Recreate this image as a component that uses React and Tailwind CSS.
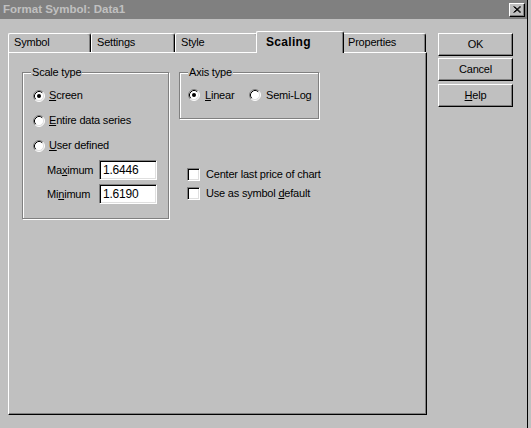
import React from 'react'

/* Win95-style "Format Symbol" dialog, Scaling tab */

const raised = 'border-t border-l border-t-white border-l-white border-r border-b border-r-black border-b-black shadow-[inset_-1px_-1px_0_#808080]'
const sunken = 'border-t border-l border-t-[#808080] border-l-[#808080] border-r border-b border-r-white border-b-white shadow-[inset_1px_1px_0_#000,inset_-1px_-1px_0_#dfdfdf] bg-white'

function Radio({ checked }) {
  return (
    <svg width="12" height="12" viewBox="0 0 12 12" className="shrink-0">
      <circle cx="6" cy="6" r="5" fill="#fff" />
      <path d="M2.11 9.89 A5.5 5.5 0 0 1 9.89 2.11" stroke="#808080" fill="none" />
      <path d="M9.89 2.11 A5.5 5.5 0 0 1 2.11 9.89" stroke="#fff" fill="none" />
      <path d="M2.82 9.18 A4.5 4.5 0 0 1 9.18 2.82" stroke="#000" fill="none" />
      <path d="M9.18 2.82 A4.5 4.5 0 0 1 2.82 9.18" stroke="#dfdfdf" fill="none" />
      {checked && <circle cx="6" cy="6" r="2" fill="#000" />}
    </svg>
  )
}

function Check() {
  return <div className={`w-[13px] h-[13px] shrink-0 ${sunken}`} />
}

function Group({ label, className, children }) {
  return (
    <div className={`relative border border-[#808080] shadow-[1px_1px_0_#fff,inset_1px_1px_0_#fff] ${className}`}>
      <span className="absolute left-[8px] top-[-8px] bg-[#c0c0c0] px-[1px] leading-[14px]">{label}</span>
      {children}
    </div>
  )
}

function Tab({ label, w, active }) {
  if (active) {
    return (
      <div className={`${w} relative z-10 -mx-[2px] mb-[-1px] h-[22px] bg-[#c0c0c0] border-t border-l border-t-white border-l-white border-r border-r-black shadow-[inset_-1px_0_0_#808080] rounded-tl-[2px] rounded-tr-[3px] pl-[9px] pt-[2px] leading-[16px] font-bold text-[12px] tracking-[0.3px]`}>
        {label}
      </div>
    )
  }
  return (
    <div className={`${w} h-[19px] border-t border-l border-t-white border-l-white border-r border-r-black shadow-[inset_-1px_0_0_#808080] rounded-tl-[2px] rounded-tr-[3px] pl-[5px] pt-[1px] leading-[14px]`}>
      {label}
    </div>
  )
}

function Button({ children }) {
  return (
    <div className={`w-[75px] h-[23px] flex items-center justify-center ${raised}`}>{children}</div>
  )
}

export default function App() {
  return (
    <div className="w-[531px] h-[428px] bg-[#c0c0c0] overflow-hidden font-['Liberation_Sans',Arial,sans-serif] text-[11px] tracking-[-0.2px] text-black">
      <div className="w-[528px] h-[428px] flex flex-col border-r border-r-black">
        {/* title bar */}
        <div className="h-[19px] bg-[#808080] flex items-center justify-between pl-[3px] pr-[2px] shrink-0">
          <span className="font-bold text-[11.5px] tracking-[0px] text-[#c0c0c0] pt-[1px]">Format Symbol: Data1</span>
          <div className={`w-[16px] h-[14px] flex items-center justify-center bg-[#c0c0c0] ${raised}`}>
            <svg width="8" height="7" viewBox="0 0 8 7">
              <path d="M0.5 0.5 L7 6.5 M1.5 0.5 L8 6.5 M7 0.5 L0.5 6.5 M8 0.5 L1.5 6.5" stroke="#000" strokeWidth="1" />
            </svg>
          </div>
        </div>

        <div className="flex pl-[8px] pt-[12px]">
          {/* tabs + panel */}
          <div className="w-[419px] flex flex-col">
            <div className="h-[21px] flex items-end">
              <Tab label="Symbol" w="w-[83px]" />
              <Tab label="Settings" w="w-[84px]" />
              <Tab label="Style" w="w-[83px]" />
              <Tab label="Scaling" w="w-[88px]" active />
              <Tab label="Properties" w="w-[84px]" />
            </div>
            <div className={`h-[363px] flex items-start pl-[13px] pt-[19px] ${raised}`}>
              <Group label="Scale type" className="w-[147px] h-[147px] pt-[10px] pl-[10px]">
                <div className="h-[25px] flex items-center gap-[4px]">
                  <Radio checked />
                  <span><span className="underline">S</span>creen</span>
                </div>
                <div className="h-[25px] flex items-center gap-[4px]">
                  <Radio />
                  <span><span className="underline">E</span>ntire data series</span>
                </div>
                <div className="h-[25px] flex items-center gap-[4px]">
                  <Radio />
                  <span><span className="underline">U</span>ser defined</span>
                </div>
                <div className="h-[24px] flex items-center pl-[14px]">
                  <span className="w-[52px]">Ma<span className="underline">x</span>imum</span>
                  <div className={`w-[58px] h-[20px] flex items-center pl-[3px] text-[12px] ${sunken}`}>1.6446</div>
                </div>
                <div className="h-[24px] flex items-center pl-[14px]">
                  <span className="w-[52px]">Mi<span className="underline">n</span>imum</span>
                  <div className={`w-[58px] h-[20px] flex items-center pl-[3px] text-[12px] ${sunken}`}>1.6190</div>
                </div>
              </Group>

              <div className="ml-[10px] flex flex-col">
                <Group label="Axis type" className="w-[140px] h-[47px] pl-[8px] pt-[14px]">
                  <div className="flex items-center">
                    <Radio checked />
                    <span className="ml-[5px] w-[44px]"><span className="underline">L</span>inear</span>
                    <Radio />
                    <span className="ml-[5px]">Semi-Log</span>
                  </div>
                </Group>
                <div className="mt-[46px] pl-[8px] flex flex-col">
                  <div className="h-[19px] flex items-center gap-[6px]">
                    <Check />
                    <span>Center last price of chart</span>
                  </div>
                  <div className="h-[19px] flex items-center gap-[6px]">
                    <Check />
                    <span>Use as symbol <span className="underline">d</span>efault</span>
                  </div>
                </div>
              </div>
            </div>
          </div>

          {/* buttons */}
          <div className="ml-[11px] mt-[2px] flex flex-col gap-[2px]">
            <Button>OK</Button>
            <Button>Cancel</Button>
            <div className="mt-[1px]">
              <Button><span><span className="underline">H</span>elp</span></Button>
            </div>
          </div>
        </div>
      </div>
    </div>
  )
}
